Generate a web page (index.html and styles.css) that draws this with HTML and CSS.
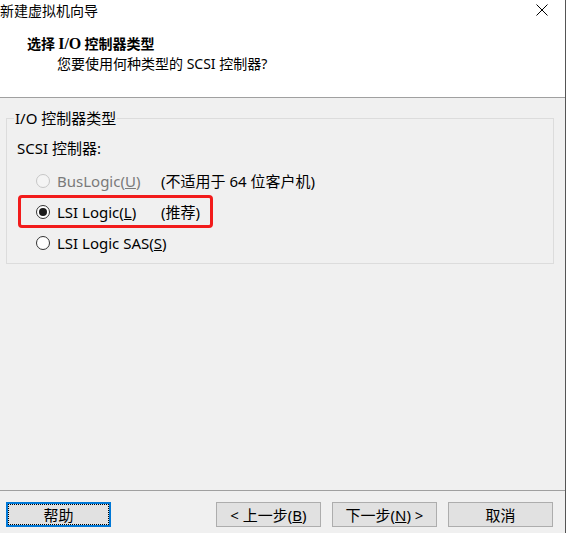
FILE: index.html
```html
<!DOCTYPE html>
<html lang="zh">
<head>
<meta charset="utf-8">
<title>新建虚拟机向导</title>
<link rel="stylesheet" href="styles.css">
</head>
<body>
<div class="win">
  <div class="header">
    <div class="titlebar">
      <span class="title">新建虚拟机向导</span>
      <svg class="close" width="12" height="12" viewBox="0 0 12 12"><path d="M0.5 0.5 L11.5 11.5 M11.5 0.5 L0.5 11.5" stroke="#000" stroke-width="1" fill="none"/></svg>
    </div>
    <div class="heading">选择 <span class="serif">I/O</span> 控制器类型</div>
    <div class="sub">您要使用何种类型的 SCSI 控制器?</div>
  </div>
  <div class="body">
    <div class="group">
      <div class="group-label">I/O 控制器类型</div>
      <div class="field-label">SCSI 控制器:</div>
      <div class="row first disabled">
        <span class="radio"></span>
        <span class="name">BusLogic(<u>U</u>)</span>
        <span class="note">(不适用于 64 位客户机)</span>
      </div>
      <div class="row">
        <span class="radio checked"></span>
        <span class="name">LSI Logic(<u>L</u>)</span>
        <span class="note">(推荐)</span>
        <span class="highlight"></span>
      </div>
      <div class="row">
        <span class="radio"></span>
        <span class="name">LSI Logic SAS(<u>S</u>)</span>
      </div>
    </div>
  </div>
  <div class="footer">
    <button class="btn focused"><span>帮助</span></button>
    <button class="btn">&lt; 上一步(<u>B</u>)</button>
    <button class="btn">下一步(<u>N</u>) &gt;</button>
    <button class="btn">取消</button>
  </div>
</div>
</body>
</html>
```
FILE: styles.css
```css
* { box-sizing: border-box; }
html, body { margin: 0; padding: 0; }
body {
  width: 566px;
  height: 533px;
  background: #f0f0f0;
  font-family: "Noto Sans", "Noto Sans CJK SC", sans-serif;
  font-size: 15px;
  color: #000;
  overflow: hidden;
}
.win {
  width: 566px;
  height: 533px;
  border-right: 1px solid #555;
  display: flex;
  flex-direction: column;
}
.header {
  height: 98px;
  background: #fff;
  border-bottom: 1px solid #a0a0a0;
  flex: none;
}
.titlebar {
  height: 32px;
  display: flex;
  justify-content: space-between;
  align-items: flex-start;
}
.title {
  font-size: 14px;
  line-height: 20px;
  font-family: "Noto Sans CJK SC", sans-serif;
}
.close {
  margin: 4px 17px 0 0;
}
.heading {
  margin-left: 27px;
  margin-top: 1px;
  font-size: 14px;
  font-weight: bold;
  line-height: 20px;
  font-family: "Noto Sans CJK SC", sans-serif;
}
.serif {
  font-family: "Liberation Serif", serif;
  font-size: 16px;
}
.sub {
  margin-left: 57px;
  font-size: 14px;
  line-height: 20px;
}
.body {
  flex: 1;
}
.group {
  margin: 20px 11px 0 6px;
  height: 146px;
  border: 1px solid #dcdcdc;
  padding-left: 7px;
}
.group-label {
  display: block;
  width: fit-content;
  margin-top: -10px;
  padding: 0 1px;
  background: #f0f0f0;
  line-height: 18px;
}
.field-label {
  margin-left: 3px;
  margin-top: 12px;
  line-height: 18px;
}
.row {
  position: relative;
  display: flex;
  align-items: center;
  height: 31px;
  padding-left: 22px;
  line-height: 18px;
  white-space: nowrap;
}
.row.first { margin-top: 8px; }
.radio {
  width: 14px;
  height: 14px;
  border-radius: 50%;
  border: 1px solid #333;
  background: #fff;
  margin-right: 7px;
  position: relative;
  flex: none;
}
.radio.checked::after {
  content: "";
  position: absolute;
  left: 2px;
  top: 2px;
  width: 8px;
  height: 8px;
  border-radius: 50%;
  background: #1a1a1a;
}
.disabled .radio {
  border-color: #c6c6c6;
  background: #f4f4f4;
}
.disabled .name { color: #7a7a7a; }
.name {
  min-width: 104px;
  flex: none;
}
.highlight {
  position: absolute;
  left: 4px;
  top: -1px;
  width: 195px;
  height: 33px;
  border: 3px solid #f21b1b;
  border-radius: 4px;
}
.footer {
  flex: none;
  height: 43px;
  border-top: 1px solid #a0a0a0;
  display: flex;
  gap: 11px;
  padding: 11px 12px 0 6px;
}
.btn {
  width: 105px;
  height: 25px;
  background: #e1e1e1;
  border: 1px solid #adadad;
  font-family: "Noto Sans", "Noto Sans CJK SC", sans-serif;
  font-size: 15px;
  line-height: 18px;
  padding: 0;
  color: #000;
  position: relative;
}
.btn.focused {
  border: 2px solid #0078d7;
  margin-right: auto;
}
.btn.focused::after {
  content: "";
  position: absolute;
  inset: 0;
  border: 1px dotted #000;
}
```
